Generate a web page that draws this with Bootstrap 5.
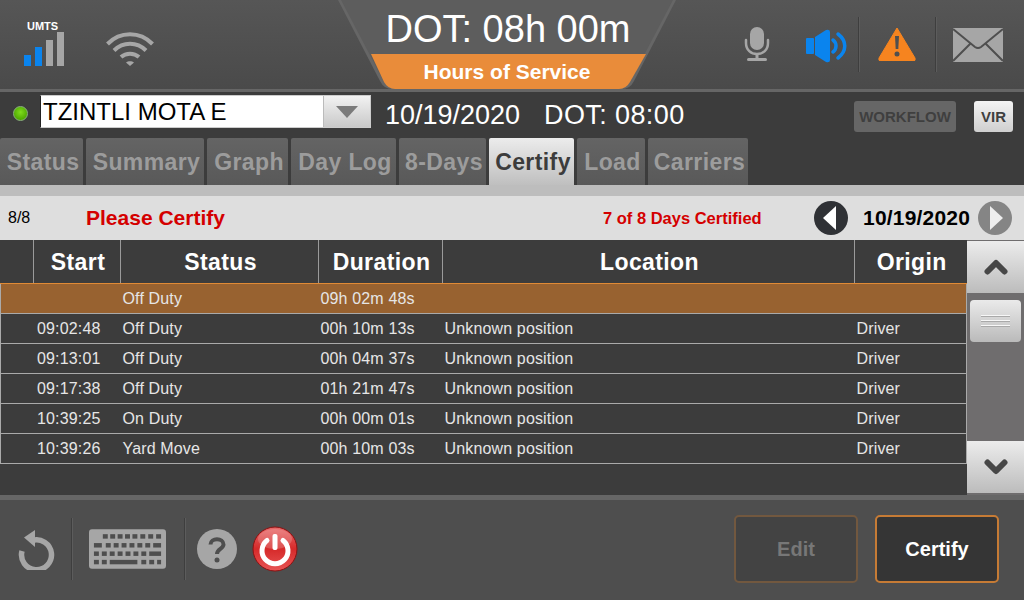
<!DOCTYPE html>
<html lang="en">
  <head>
    <meta charset="UTF-8" />
    <meta name="viewport" content="width=device-width, initial-scale=1.0" />
    <title>Hours of Service - Certify</title>
    <link href="https://cdn.jsdelivr.net/npm/bootstrap@5.3.3/dist/css/bootstrap.min.css" rel="stylesheet" />
    <style>
      body { width: 1024px; height: 600px; overflow: hidden; background: #3c3c3c; font-family: "Liberation Sans", Arial, sans-serif; }
      svg { display: block; flex: none; }
      /* top bar */
      .top-bar { height: 92px; background: linear-gradient(#565656, #4a4a4a); border-bottom: 3px solid #666; }
      .top-left { width: 338px; padding: 20px 0 0 24px; }
      .top-right { width: 348px; padding: 17px 0 0 68px; }
      .top-mid { width: 338px; height: 89px; position: relative; }
      .top-mid svg { position: absolute; left: 0; top: 0; }
      .dot-big { position: relative; height: 54px; padding-left: 2px; line-height: 59px; font-size: 38px; color: #fff; text-align: center; }
      .hos-label { position: relative; height: 35px; line-height: 36px; font-size: 21px; font-weight: 700; color: #fff; text-align: center; }
      .umts { font-size: 11px; font-weight: 700; color: #fff; line-height: 12px; margin-left: 3px; }
      .v-sep { width: 2px; height: 55px; background: #3e3e3e; border-right: 1px solid #5c5c5c; }
      /* driver row */
      .driver-row { height: 46px; background: #3c3c3c; }
      .led { width: 15px; height: 15px; border-radius: 50%; margin: 14px 12px 0 13px; background: radial-gradient(circle at 50% 40%, #7fdc1c, #4da600 75%); border: 1px solid #8ab37a; }
      .driver-box { width: 331px; height: 33px; margin-top: 3px; background: #fff; border: 1px solid #ccc; border-left: 1px solid #222; font-size: 24px; line-height: 31px; color: #000; padding-left: 2px; }
      .drop-btn { width: 47px; height: 31px; background: linear-gradient(#f2f2f2, #c9c9c9); border-left: 1px solid #bbb; }
      .date-text { font-size: 27px; line-height: 46px; color: #fff; margin-left: 14px; width: 159px; }
      .dot-text { font-size: 27px; line-height: 46px; color: #fff; width: 310px; letter-spacing: 0.4px; }
      .wf-btn { width: 102px; height: 31px; margin-top: 9px; background: #666; border-radius: 3px; color: #3f3f3f; font-size: 15px; font-weight: 700; line-height: 31px; text-align: center; }
      .vir-btn { width: 39px; height: 31px; margin: 9px 0 0 18px; background: linear-gradient(#f4f4f4, #cfcfcf); border-radius: 3px; color: #3f3f3f; font-size: 15px; font-weight: 700; line-height: 31px; text-align: center; }
      /* tabs */
      .tab-row { height: 47px; background: #3c3c3c; gap: 3px; }
      .tab-item { height: 47px; padding-left: 3px; background: linear-gradient(#646464, #595959); color: #9c9c9c; font-size: 23px; font-weight: 700; line-height: 48px; letter-spacing: 0.4px; text-align: center; border-radius: 2px 2px 0 0; }
      .tab-item.on { background: linear-gradient(#ececec, #bfbfbf); color: #3c3c3c; }
      .grey-strip { height: 11px; background: #bdbdbd; }
      /* info bar */
      .info-bar { height: 44px; background: #dedede; color: #000; }
      .info-count { width: 86px; padding-left: 8px; font-size: 16px; }
      .info-alert { width: 517px; font-size: 21px; font-weight: 700; color: #d40000; }
      .info-days { width: 211px; font-size: 16.5px; font-weight: 700; color: #d40000; }
      .info-date { width: 130px; padding-left: 15px; font-size: 21px; font-weight: 700; letter-spacing: 0.2px; }
      /* log table */
      .log-area { height: 255px; background: #3c3c3c; }
      .log-wrap { width: 967px; }
      .log-table { width: 966px; table-layout: fixed; border-collapse: collapse; --bs-table-bg: transparent; --bs-table-color: #fff; color: #fff; }
      .log-table th { height: 43px; padding: 1px 0 0 2px; font-size: 23px; font-weight: 700; letter-spacing: 0.4px; text-align: center; vertical-align: middle; border: 0; border-left: 1px solid #9a9a9a; border-bottom: 1px solid #e08a35; }
      .log-table th:first-child { border-left: 0; }
      .log-table td { height: 30px; padding: 0 2px; font-size: 16px; letter-spacing: 0.15px; line-height: 29px; color: #e6e6e6; border: 0; border-bottom: 1px solid #aaa; white-space: nowrap; vertical-align: middle; }
      .log-table tr td:first-child { border-left: 1px solid #aaa; }
      .log-table tr td:last-child { border-right: 1px solid #aaa; }
      .log-table td.time-col { text-align: right; padding-right: 20px; }
      .log-table tr.row-active td { background: #986230; }
      /* scroll */
      .scroll-col { width: 57px; height: 255px; background: #6f6d6e; padding-top: 1px; }
      .scroll-btn { height: 52px; background: linear-gradient(#ececec, #bcbcbc); display: flex; align-items: center; justify-content: center; }
      .scroll-thumb { width: 51px; height: 42px; margin: 7px 0 99px 3px; border-radius: 4px; background: linear-gradient(#eaeaea, #bababa); display: flex; align-items: center; justify-content: center; }
      /* bottom */
      .bottom-bar { height: 105px; background: #4e4e4e; border-top: 5px solid #666; padding-top: 15px; }
      .b-sep { width: 2px; height: 62px; margin-top: 3px; background: #3e3e3e; border-right: 1px solid #5c5c5c; }
      .act-btn { width: 124px; height: 68px; border-radius: 5px; border: 2px solid #c67b35; background: #353535; color: #fff; font-size: 20px; font-weight: 700; padding: 0; }
      .act-btn:disabled { opacity: 1; background: #434343; border-color: #72583f; color: #777; }
    </style>
  </head>
  <body>
    <main class="d-flex flex-column">
      <!--top bar-->
      <header class="top-bar d-flex">
        <div class="top-left d-flex">
          <div>
            <div class="umts">UMTS</div>
            <svg width="40" height="34" viewBox="0 0 40 34">
              <rect x="0" y="23" width="7" height="11" fill="#0a84ee" />
              <rect x="11" y="15" width="7" height="19" fill="#0a84ee" />
              <rect x="22" y="8" width="7" height="26" fill="#a6a6a6" />
              <rect x="33" y="0" width="7" height="34" fill="#a6a6a6" />
            </svg>
          </div>
          <svg class="wifi-icon" style="margin: 12px 0 0 42px" width="48" height="34" viewBox="0 0 48 34" fill="none" stroke="#a6a6a6" stroke-width="4">
            <path d="M1.500 12C14 -1 34 -1 46.500 12" />
            <path d="M8 18.500C17 9.500 31 9.500 40 18.500" />
            <path d="M15 25C20 20.500 28 20.500 33 25" />
            <path d="M20 30.500L24 34L28 30.500C26 28.800 22 28.800 20 30.500Z" fill="#a6a6a6" stroke="none" />
          </svg>
        </div>
        <div class="top-mid">
          <svg width="338" height="89" viewBox="0 0 338 89">
            <path d="M0 0H338L296 81Q292 89 284 89H54Q46 89 42 81Z" fill="#666" />
            <path d="M3 0H335L293 80Q289 87 282 87H56Q49 87 45 80Z" fill="#5d5d5d" />
            <path d="M33 54H308L292 82Q288 89 281 89H57Q50 89 46 82Z" fill="#e98c3a" />
          </svg>
          <div class="dot-big">DOT: 08h 00m</div>
          <div class="hos-label">Hours of Service</div>
        </div>
        <div class="top-right d-flex">
          <svg width="26" height="34" style="margin-top: 10px" viewBox="0 0 26 34" fill="#a6a6a6">
            <rect x="6" y="0" width="14" height="23" rx="7" />
            <path d="M2 13V16C2 23 7 27 13 27C19 27 24 23 24 16V13" fill="none" stroke="#a6a6a6" stroke-width="2.500" stroke-linecap="round" />
            <rect x="11.500" y="26" width="3" height="5" />
            <rect x="3" y="31" width="20" height="3" rx="1.500" />
          </svg>
          <svg width="41" height="34" style="margin: 12px 0 0 36px" viewBox="0 0 41 34" fill="#0a84ee">
            <rect x="0" y="9" width="8" height="16" rx="1" />
            <path d="M9 8L20 1Q24 0 24 3V31Q24 34 20 33L9 26Z" />
            <path d="M27 11C31 14 31 20 27 23" fill="none" stroke="#0a84ee" stroke-width="3.500" stroke-linecap="round" />
            <path d="M32 5C41 12 41 22 32 29" fill="none" stroke="#0a84ee" stroke-width="3.500" stroke-linecap="round" />
          </svg>
          <div class="v-sep" style="margin-left: 11px"></div>
          <svg width="38" height="34" style="margin: 10px 0 0 18px" viewBox="0 0 38 34">
            <path d="M19 1L37 31Q38 34 35 34H3Q0 34 1 31Z" fill="#f6841f" stroke="#f6841f" stroke-linejoin="round" />
            <path d="M17 9H21L20.300 22H17.700Z" fill="#4f4f4f" />
            <circle cx="19" cy="27" r="2.500" fill="#4f4f4f" />
          </svg>
          <div class="v-sep" style="margin-left: 19px"></div>
          <svg width="50" height="34" style="margin: 11px 0 0 16px" viewBox="0 0 50 34">
            <rect width="50" height="34" fill="#a6a6a6" />
            <path d="M0 1L22 19Q25 21 28 19L50 1M0 33L18 15M50 33L32 15" fill="none" stroke="#4f4f4f" stroke-width="2" />
          </svg>
        </div>
      </header>

      <!--driver row-->
      <section class="driver-row d-flex">
        <div class="led"></div>
        <div class="driver-box d-flex justify-content-between">
          <span>TZINTLI MOTA E</span>
          <span class="drop-btn d-flex align-items-center justify-content-center">
            <svg width="22" height="12" viewBox="0 0 22 12"><path d="M0 0H22L11 12Z" fill="#7b7b7b" /></svg>
          </span>
        </div>
        <div class="date-text">10/19/2020</div>
        <div class="dot-text">DOT: 08:00</div>
        <div class="wf-btn">WORKFLOW</div>
        <div class="vir-btn">VIR</div>
      </section>

      <!--tabs-->
      <nav class="tab-row d-flex">
        <div class="tab-item" style="width: 83px">Status</div>
        <div class="tab-item" style="width: 118px">Summary</div>
        <div class="tab-item" style="width: 81px">Graph</div>
        <div class="tab-item" style="width: 105px">Day Log</div>
        <div class="tab-item" style="width: 87px">8-Days</div>
        <div class="tab-item on" style="width: 85px">Certify</div>
        <div class="tab-item" style="width: 68px">Load</div>
        <div class="tab-item" style="width: 100px">Carriers</div>
      </nav>
      <div class="grey-strip"></div>

      <!--certify info-->
      <section class="info-bar d-flex align-items-center">
        <div class="info-count">8/8</div>
        <div class="info-alert">Please Certify</div>
        <div class="info-days">7 of 8 Days Certified</div>
        <svg width="34" height="34" viewBox="0 0 34 34">
          <circle cx="17" cy="17" r="17" fill="#2f3135" />
          <path d="M22 5V29L9 17Z" fill="#fff" />
        </svg>
        <div class="info-date">10/19/2020</div>
        <svg width="34" height="34" viewBox="0 0 34 34">
          <circle cx="17" cy="17" r="17" fill="#858585" />
          <path d="M12 5V29L25 17Z" fill="#eee" />
        </svg>
      </section>

      <!--log table-->
      <section class="log-area d-flex">
        <div class="log-wrap">
          <table class="table mb-0 log-table">
            <colgroup>
              <col style="width: 33px" /><col style="width: 87px" /><col style="width: 198px" />
              <col style="width: 124px" /><col style="width: 412px" /><col style="width: 112px" />
            </colgroup>
            <thead>
              <tr><th></th><th>Start</th><th>Status</th><th>Duration</th><th>Location</th><th>Origin</th></tr>
            </thead>
            <tbody>
              <tr class="row-active"><td></td><td class="time-col"></td><td>Off Duty</td><td>09h 02m 48s</td><td></td><td></td></tr>
              <tr><td></td><td class="time-col">09:02:48</td><td>Off Duty</td><td>00h 10m 13s</td><td>Unknown position</td><td>Driver</td></tr>
              <tr><td></td><td class="time-col">09:13:01</td><td>Off Duty</td><td>00h 04m 37s</td><td>Unknown position</td><td>Driver</td></tr>
              <tr><td></td><td class="time-col">09:17:38</td><td>Off Duty</td><td>01h 21m 47s</td><td>Unknown position</td><td>Driver</td></tr>
              <tr><td></td><td class="time-col">10:39:25</td><td>On Duty</td><td>00h 00m 01s</td><td>Unknown position</td><td>Driver</td></tr>
              <tr><td></td><td class="time-col">10:39:26</td><td>Yard Move</td><td>00h 10m 03s</td><td>Unknown position</td><td>Driver</td></tr>
            </tbody>
          </table>
        </div>
        <div class="scroll-col">
          <div class="scroll-btn">
            <svg width="24" height="16" viewBox="0 0 24 16"><path d="M3.500 12.500L12 4L20.500 12.500" fill="none" stroke="#474747" stroke-width="6" stroke-linecap="round" stroke-linejoin="round" /></svg>
          </div>
          <div class="scroll-thumb">
            <svg width="29" height="12" viewBox="0 0 29 12" fill="#f7f7f7"><rect y="0" width="29" height="1" /><rect y="5" width="29" height="1" /><rect y="10" width="29" height="1" /><rect y="1" width="29" height="1" fill="#a9a9a9" /><rect y="6" width="29" height="1" fill="#a9a9a9" /><rect y="11" width="29" height="1" fill="#a9a9a9" /></svg>
          </div>
          <div class="scroll-btn">
            <svg width="24" height="16" viewBox="0 0 24 16"><path d="M3.500 3.500L12 12L20.500 3.500" fill="none" stroke="#474747" stroke-width="6" stroke-linecap="round" stroke-linejoin="round" /></svg>
          </div>
        </div>
      </section>

      <!--bottom bar-->
      <footer class="bottom-bar d-flex">
        <svg width="38" height="42" style="margin: 13px 0 0 18px" viewBox="0 0 38 42">
          <path d="M14 12.500A15 15 0 1 1 4 23" fill="none" stroke="#a6a6a6" stroke-width="5.500" />
          <path d="M6 9.500L17 2V19Z" fill="#a6a6a6" />
        </svg>
        <div class="b-sep" style="margin-left: 15px"></div>
        <svg width="77" height="40" style="margin: 14px 0 0 16px" viewBox="0 0 78 40">
          <rect width="78" height="40" rx="3" fill="#a6a6a6" />
          <g fill="#4e4e4e">
            <rect x="14" y="5" width="5" height="4.500" /><rect x="21.500" y="5" width="5" height="4.500" /><rect x="29" y="5" width="5" height="4.500" /><rect x="36.500" y="5" width="5" height="4.500" /><rect x="44" y="5" width="5" height="4.500" /><rect x="52" y="5" width="5" height="4.500" /><rect x="60" y="5" width="5" height="4.500" /><rect x="68" y="5" width="5" height="4.500" />
            <rect x="5" y="14" width="8" height="4.500" /><rect x="17" y="14" width="5" height="4.500" /><rect x="25" y="14" width="5" height="4.500" /><rect x="33" y="14" width="5" height="4.500" /><rect x="41" y="14" width="5" height="4.500" /><rect x="49" y="14" width="5" height="4.500" /><rect x="57" y="14" width="5" height="4.500" /><rect x="65" y="14" width="8" height="4.500" />
            <rect x="5" y="22.500" width="5" height="4.500" /><rect x="13" y="22.500" width="5" height="4.500" /><rect x="21" y="22.500" width="5" height="4.500" /><rect x="29" y="22.500" width="5" height="4.500" /><rect x="37" y="22.500" width="5" height="4.500" /><rect x="45" y="22.500" width="5" height="4.500" /><rect x="53" y="22.500" width="5" height="4.500" /><rect x="61" y="22.500" width="12" height="4.500" />
            <rect x="5" y="31" width="5" height="4.500" /><rect x="13" y="31" width="5" height="4.500" /><rect x="21" y="31" width="28" height="4.500" /><rect x="53" y="31" width="5" height="4.500" /><rect x="61" y="31" width="5" height="4.500" /><rect x="69" y="31" width="4" height="4.500" />
          </g>
        </svg>
        <div class="b-sep" style="margin-left: 18px"></div>
        <svg width="40" height="40" style="margin: 14px 0 0 11px" viewBox="0 0 40 40">
          <circle cx="20" cy="20" r="20" fill="#a6a6a6" />
          <path d="M13.500 15.500C13.500 8.500 26.500 8.500 26.500 15.500C26.500 20 20 20 20 25" fill="none" stroke="#4e4e4e" stroke-width="4" />
          <circle cx="20" cy="31" r="2.500" fill="#4e4e4e" />
        </svg>
        <svg width="46" height="46" style="margin: 11px 0 0 15px" viewBox="0 0 46 46">
          <defs>
            <linearGradient id="redGrad" x1="0" y1="0" x2="0" y2="1">
              <stop offset="0" stop-color="#e86a6a" /><stop offset="0.5" stop-color="#d62a2a" /><stop offset="1" stop-color="#e85555" />
            </linearGradient>
          </defs>
          <circle cx="23" cy="23" r="22" fill="url(#redGrad)" stroke="#8c1010" />
          <ellipse cx="23" cy="13" rx="17" ry="10" fill="#fff" opacity="0.18" />
          <path d="M15 14.500A13 13 0 1 0 31 14.500" fill="none" stroke="#fff" stroke-width="5" stroke-linecap="round" />
          <rect x="20.500" y="8" width="5" height="16" rx="2" fill="#fff" />
        </svg>
        <div class="ms-auto d-flex" style="gap: 17px; margin-right: 25px">
          <button class="btn act-btn" type="button" disabled>Edit</button>
          <button class="btn act-btn" type="button">Certify</button>
        </div>
      </footer>
    </main>
  </body>
</html>
